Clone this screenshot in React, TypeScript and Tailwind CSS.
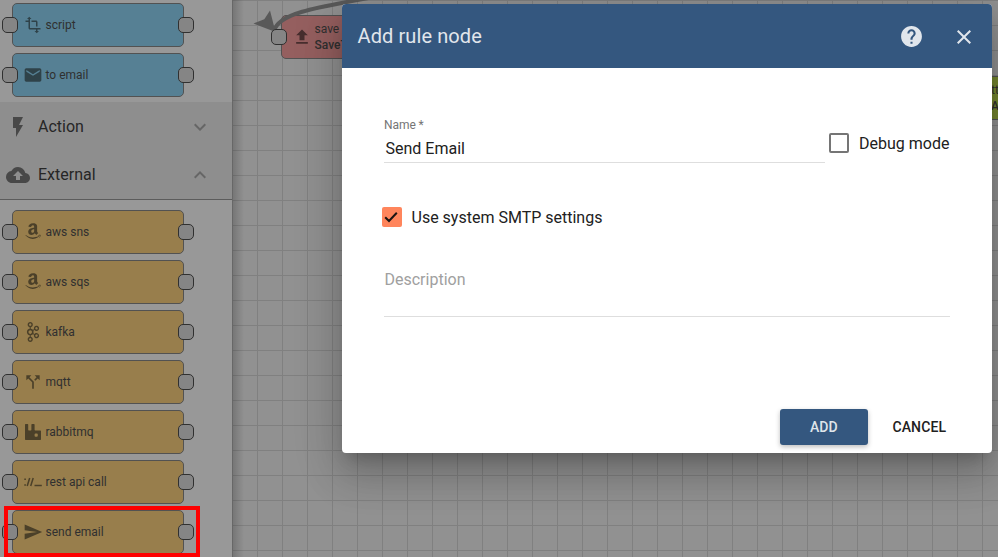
import type { ReactNode } from "react";
import {
  MdTransform, MdEmail, MdFlashOn, MdCloudUpload, MdCallSplit, MdSend,
  MdFileUpload, MdHelp, MdExpandMore, MdExpandLess, MdClose,
} from "react-icons/md";
import { FaAmazon } from "react-icons/fa";
import { SiApachekafka, SiRabbitmq } from "react-icons/si";

function Port({ className = "" }: { className?: string }) {
  return <span className={`size-4 shrink-0 rounded-[5px] border border-[#303030] bg-[#858585] ${className}`} />;
}

function PaletteNode({ icon, label, tone }: { icon: ReactNode; label: string; tone: string }) {
  return (
    <div className={`flex h-11 w-[172px] shrink-0 items-center rounded-[5px] border border-[#525252] ${tone}`}>
      <Port className="-ml-[11px]" />
      <span className="ml-[4.5px] flex w-5 shrink-0 items-center justify-center">{icon}</span>
      <span className="ml-[3px] flex-1 whitespace-nowrap text-[12px] leading-4 text-[#303030]">{label}</span>
      <Port className="-mr-[11px]" />
    </div>
  );
}

function GroupHeader({ icon, label, chevron }: { icon: ReactNode; label: string; chevron: ReactNode }) {
  return (
    <div className="flex h-12 items-center pl-1.5 pr-5 pt-px text-[#484848]">
      <span className="flex w-6 justify-center">{icon}</span>
      <span className="ml-2 flex-1 pt-px text-[16px] text-[#262626]">{label}</span>
      <span className="text-[#666]">{chevron}</span>
    </div>
  );
}

const blue = "bg-[#568094] text-[#2f4249]";
const orange = "bg-[#987e4c] text-[#4b4029]";

function RestIcon() {
  return (
    <svg width="18" height="18" viewBox="0 0 18 18" fill="none" stroke="currentColor" strokeWidth="1.5">
      <path d="M0.3 6.2h1.6M0.3 12h1.6M3.2 13 5.7 5M6.7 13 9.2 5M10.5 12.6h7.3" />
    </svg>
  );
}

function AmazonIcon() {
  return <FaAmazon size={18} className="-mt-0.5" />;
}

function Sidebar() {
  return (
    <aside className="relative z-10 flex h-full w-[232px] shrink-0 flex-col overflow-hidden bg-[#989898]">
      <div className="flex flex-col gap-1.5 pb-[5px] pl-3 pt-[3px]">
        <PaletteNode tone={blue} label="script" icon={<MdTransform size={18} />} />
        <PaletteNode tone={blue} label="to email" icon={<MdEmail size={20} />} />
      </div>
      <div className="h-[98px] shrink-0 border-b border-[#5c5c5c] bg-[#8e8e8e]">
        <GroupHeader label="Action" icon={<MdFlashOn size={24} />} chevron={<MdExpandMore size={24} />} />
        <GroupHeader label="External" icon={<MdCloudUpload size={24} />} chevron={<MdExpandLess size={24} />} />
      </div>
      <div className="flex flex-col gap-1.5 pl-3 pt-2.5">
        <PaletteNode tone={orange} label="aws sns" icon={<AmazonIcon />} />
        <PaletteNode tone={orange} label="aws sqs" icon={<AmazonIcon />} />
        <PaletteNode tone={orange} label="kafka" icon={<SiApachekafka size={20} />} />
        <PaletteNode tone={orange} label="mqtt" icon={<MdCallSplit size={20} />} />
        <PaletteNode tone={orange} label="rabbitmq" icon={<SiRabbitmq size={16} />} />
        <PaletteNode tone={orange} label="rest api call" icon={<RestIcon />} />
        <PaletteNode tone={orange} label="send email" icon={<MdSend size={20} />} />
      </div>
      <div className="absolute left-1 top-[506px] h-[51px] w-[196px] border-4 border-[#fe0000]" />
    </aside>
  );
}

function RuleCanvas() {
  return (
    <main className="relative h-full flex-1 overflow-hidden bg-[#919191] bg-[linear-gradient(to_right,#808080_1px,transparent_1px),linear-gradient(to_bottom,#808080_1px,transparent_1px)] bg-[size:25px_25px]">
      <div className="absolute inset-y-0 left-0 w-3 bg-linear-to-r from-black/20 to-transparent" />
      <div className="absolute left-[49px] top-[15px] flex h-11 w-[172px] items-center rounded-[5px] border border-[#525252] bg-[#955f5f] text-[#472e2e]">
        <MdFileUpload size={20} className="ml-[10px]" />
        <div className="ml-[2.5px] whitespace-nowrap text-[12px] leading-4 text-[#303030]">
          <div>save</div>
          <div className="font-medium">SaveT</div>
        </div>
      </div>
      <svg className="absolute left-0 top-0" width="160" height="60" fill="none">
        <path d="M42 31C46 14 80 8 142-3" stroke="#595959" strokeWidth="4" />
        <path d="M38 10.5 32.3 19.3 21.5 23.5 43.5 32Z" fill="#595959" />
      </svg>
      <Port className="absolute left-[39px] top-[29px] block" />
      <div className="absolute left-[749px] top-[76px] h-11 w-[172px] rounded-[5px] border border-[#525252] bg-[#75862f] pl-[9px] pt-[5px] text-[12px] leading-4 text-[#303030]">
        <div>tt</div>
        <div className="font-medium">A</div>
      </div>
    </main>
  );
}

function Dialog() {
  return (
    <section className="absolute left-[342px] top-1 flex h-[449px] w-[650px] flex-col overflow-hidden rounded bg-white text-[16px] text-[#212121] shadow-[0_11px_15px_-7px_rgba(0,0,0,0.2),0_24px_38px_3px_rgba(0,0,0,0.14),0_9px_46px_8px_rgba(0,0,0,0.12)]">
      <header className="flex h-16 shrink-0 items-center bg-[#34577f] pl-[15.5px] pr-4 text-[#e1e6ec]">
        <h2 className="flex-1 text-[20px] tracking-[0.1px]">Add rule node</h2>
        <MdHelp size={25} />
        <MdClose size={24} className="ml-[28px] mt-0.5" />
      </header>
      <div className="flex flex-1 flex-col px-[42px]">
        <div className="mt-[49px] flex h-[46px]">
          <div className="w-[441px] border-b border-[#dedede]">
            <div className="text-[12px] leading-4 text-[#757575]">Name<span className="ml-[2.5px]">*</span></div>
            <div className="ml-[1.5px] mt-1.5 leading-5">Send Email</div>
          </div>
          <div className="ml-1 mt-4 flex h-5 items-center">
            <span className="size-5 rounded-[2px] border-2 border-[#757575]" />
            <span className="ml-2.5 whitespace-nowrap pt-0.5">Debug mode</span>
          </div>
        </div>
        <div className="-ml-0.5 mt-[44px] flex h-5 items-center">
          <span className="flex size-5 items-center justify-center rounded-[2px] bg-[#ff855c] pr-[1.5px]">
            <svg width="14" height="14" viewBox="0 0 14 14" fill="none" stroke="#1c1512" strokeWidth="2">
              <path d="M1.2 7.2 5 11 12.8 2.8" />
            </svg>
          </span>
          <span className="ml-[9.5px] pt-0.5">Use system SMTP settings</span>
        </div>
        <div className="mt-[42px] h-[48px] border-b border-[#dedede] pl-[0.5px] pt-px leading-5 text-[#a0a0a0]">Description</div>
      </div>
      <footer className="flex h-11 shrink-0 items-start justify-end pr-[45.8px] text-[14px] font-medium tracking-[0.14px]">
        <span className="flex h-9 w-[88px] items-center justify-center rounded-[3px] bg-[#34577f] pr-px text-[#dfe5ea] shadow-[0_2px_5px_rgba(0,0,0,0.26)]">ADD</span>
        <span className="ml-6 flex h-9 items-center">CANCEL</span>
      </footer>
    </section>
  );
}

export default function App() {
  return (
    <div className="relative flex h-[557px] w-[998px] overflow-hidden font-[Roboto,sans-serif]">
      <Sidebar />
      <RuleCanvas />
      <div className="absolute inset-0 z-20">
        <Dialog />
      </div>
    </div>
  );
}
